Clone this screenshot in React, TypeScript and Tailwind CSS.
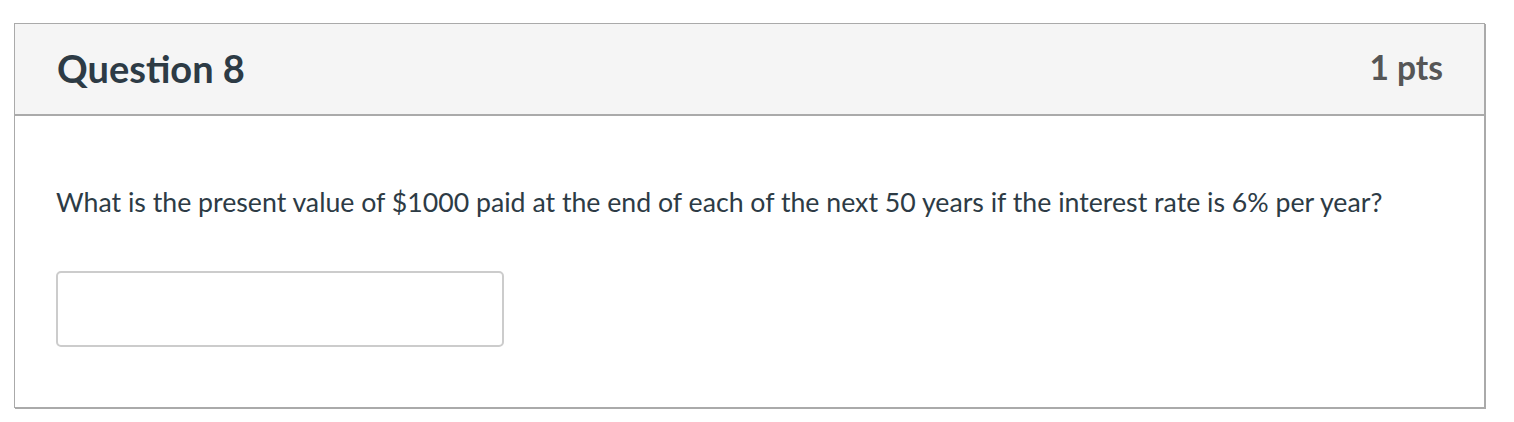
export default function App() {
  return (
    <div className="min-h-screen bg-white pt-[23px] pl-[14px] pr-[28px] font-['Lato','Liberation_Sans',sans-serif]">
      <div className="w-[1471px] border border-[#aaaaaa] shadow-[1px_1px_0_#aaaaaa] bg-white">
        <div className="h-[92px] bg-[#f5f5f5] border-b-2 border-[#aaaaaa] flex items-center justify-between pl-[42px] pr-[41px]">
          <h2 className="text-[38px] font-bold text-[#2d3b45] leading-none pb-[2px]">Question 8</h2>
          <span className="text-[33.5px] font-bold text-[#565656] leading-none pb-[2px]">1 pts</span>
        </div>
        <div className="pl-[41px] pt-[73px] pb-[60px]">
          <p className="text-[26.7px] text-[#2d3b45] leading-none">
            What is the present value of $1000 paid at the end of each of the next 50 years if the interest rate is 6% per year?
          </p>
          <input
            type="text"
            className="mt-[55px] block w-[448px] h-[76px] rounded-[5px] border-2 border-[#cccccc] bg-white outline-none"
          />
        </div>
      </div>
    </div>
  );
}
